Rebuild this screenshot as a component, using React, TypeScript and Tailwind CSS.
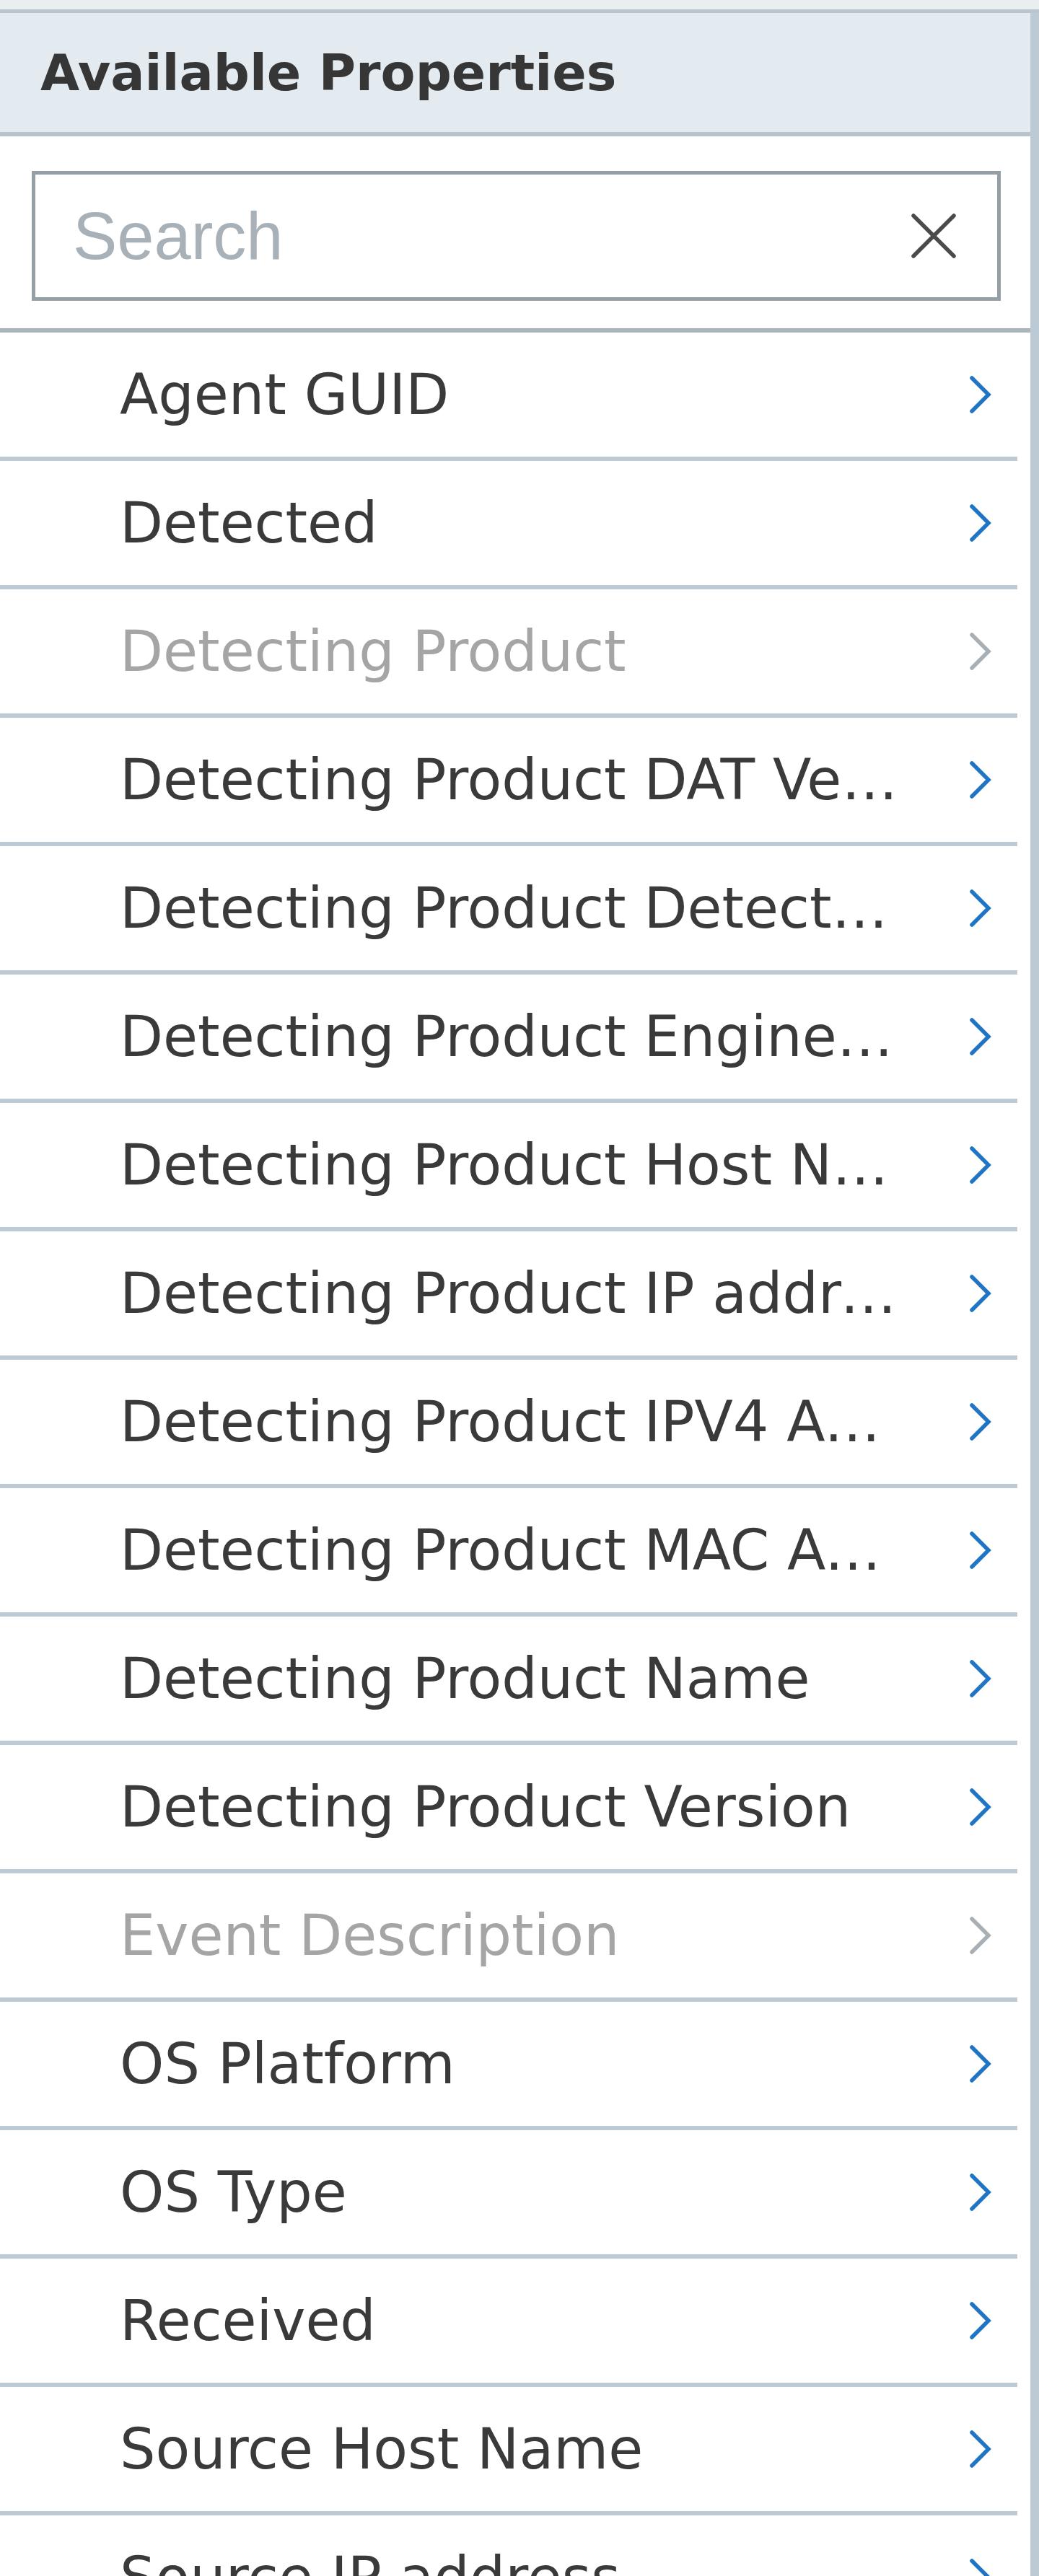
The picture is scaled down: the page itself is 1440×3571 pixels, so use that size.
import { useState } from 'react';

interface Property {
  label: string;
  disabled?: boolean;
}

const properties: Property[] = [
  { label: 'Agent GUID' },
  { label: 'Detected' },
  { label: 'Detecting Product', disabled: true },
  { label: 'Detecting Product DAT Version' },
  { label: 'Detecting Product Detection Method' },
  { label: 'Detecting Product Engine Version' },
  { label: 'Detecting Product Host Name' },
  { label: 'Detecting Product IP address' },
  { label: 'Detecting Product IPV4 Address' },
  { label: 'Detecting Product MAC Address' },
  { label: 'Detecting Product Name' },
  { label: 'Detecting Product Version' },
  { label: 'Event Description', disabled: true },
  { label: 'OS Platform' },
  { label: 'OS Type' },
  { label: 'Received' },
  { label: 'Source Host Name' },
  { label: 'Source IP address' },
  { label: 'Source MAC address' },
];

function Chevron({ disabled }: { disabled?: boolean }) {
  return (
    <svg width="34" height="54" viewBox="0 0 34 54" className="shrink-0">
      <polyline
        points="5,4 28,27 5,50"
        fill="none"
        stroke={disabled ? '#a9b0b5' : '#1f74c4'}
        strokeWidth="5.5"
        strokeLinecap="round"
        strokeLinejoin="miter"
      />
    </svg>
  );
}

export default function App() {
  const [search, setSearch] = useState('');

  return (
    <div className="w-[1440px] h-[3571px] overflow-hidden bg-white font-['DejaVu_Sans',sans-serif]">
      {/* top strip */}
      <div className="h-[18px] bg-[#e9eef1] border-b-[5px] border-[#b9c4cc]" />

      <div className="flex">
        <div className="flex-1 min-w-0 flex flex-col">
          {/* header */}
          <div className="h-[171px] bg-[#e3eaf0] border-b-[6px] border-[#b7c4cd] flex items-center pl-[56px]">
            <h2 className="text-[70px] font-bold text-[#363636] leading-none">Available Properties</h2>
          </div>

          {/* search */}
          <div className="h-[272px] pt-[48px] pl-[44px] pr-[41px] border-b-[6px] border-[#a9b5bc]">
            <div className="h-[180px] border-[5px] border-[#959fa6] flex items-center pl-[52px] pr-[56px]">
              <input
                value={search}
                onChange={(e) => setSearch(e.target.value)}
                placeholder="Search"
                className="flex-1 w-0 min-w-0 outline-none bg-transparent text-[92px] text-[#333] placeholder:text-[#a8b1b7] font-['Liberation_Sans',sans-serif]"
              />
              <svg width="64" height="64" viewBox="0 0 64 64" className="shrink-0">
                <path d="M4 4 L60 60 M60 4 L4 60" stroke="#4a4a4a" strokeWidth="5.5" strokeLinecap="round" />
              </svg>
            </div>
          </div>

          {/* list */}
          <ul>
            {properties.map((p) => (
              <li key={p.label} className="mr-[18px] h-[178px] border-b-[6px] border-[#bccad5] flex items-center">
                <span
                  className={`flex-1 min-w-0 pl-[166px] pr-[90px] truncate text-[78px] leading-normal ${
                    p.disabled ? 'text-[#a5a5a5]' : 'text-[#3a3a3a]'
                  }`}
                >
                  {p.label}
                </span>
                <div className="w-[68px] shrink-0 flex items-center">
                  <Chevron disabled={p.disabled} />
                </div>
              </li>
            ))}
          </ul>
        </div>

        {/* right edge */}
        <div className="w-[12px] shrink-0 bg-[#bccad6] self-stretch" />
      </div>
    </div>
  );
}
